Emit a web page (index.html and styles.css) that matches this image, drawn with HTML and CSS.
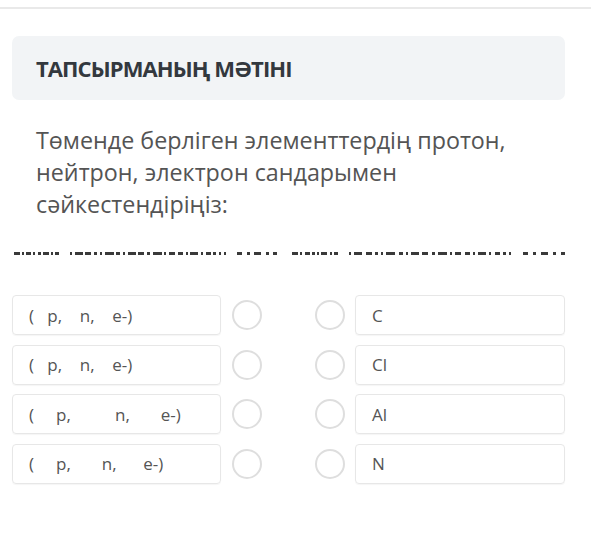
FILE: index.html
```html
<!DOCTYPE html>
<html lang="kk">
<head>
<meta charset="utf-8">
<link rel="stylesheet" href="styles.css">
</head>
<body>
<div class="topbar"></div>
<main class="page">
  <div class="task-head">ТАПСЫРМАНЫҢ МӘТІНІ</div>
  <p class="task-text">Төменде берліген элементтердің протон, нейтрон, электрон сандарымен сәйкестендіріңіз:</p>
  <div class="cutline">
    <span class="grp g1"><i class="d6"></i><i class="d2"></i><i class="d5"></i><i class="d2"></i><i class="d3"></i><i class="d6"></i><i class="d2"></i><i class="d4"></i></span>
    <span class="grp g2"><i class="d2"></i><i class="d8"></i><i class="d6"></i><i class="d3"></i><i class="d2"></i><i class="d9"></i><i class="d4"></i><i class="d2"></i><i class="d8"></i><i class="d6"></i><i class="d3"></i><i class="d9"></i><i class="d2"></i><i class="d6"></i><i class="d5"></i><i class="d2"></i><i class="d8"></i><i class="d2"></i><i class="d5"></i><i class="d3"></i><i class="d2"></i><i class="d2"></i></span>
    <span class="grp g3"><i class="d5"></i><i class="d3"></i><i class="d7"></i><i class="d3"></i><i class="d4"></i></span>
    <span class="grp g4"><i class="d6"></i><i class="d2"></i><i class="d5"></i><i class="d3"></i><i class="d2"></i><i class="d6"></i><i class="d2"></i><i class="d4"></i></span>
    <span class="grp g5"><i class="d2"></i><i class="d8"></i><i class="d6"></i><i class="d3"></i><i class="d2"></i><i class="d9"></i><i class="d4"></i><i class="d2"></i><i class="d8"></i><i class="d6"></i><i class="d3"></i><i class="d9"></i><i class="d2"></i><i class="d6"></i><i class="d5"></i><i class="d2"></i><i class="d8"></i><i class="d2"></i><i class="d5"></i><i class="d3"></i><i class="d2"></i></span>
    <span class="grp g6"><i class="d5"></i><i class="d3"></i><i class="d7"></i><i class="d3"></i><i class="d4"></i></span>
  </div>
  <div class="match">
    <div class="row">
      <div class="box">(   p,    n,    e-)</div>
      <span class="radio left"></span>
      <span class="radio right"></span>
      <div class="box">C</div>
    </div>
    <div class="row">
      <div class="box">(   p,    n,    e-)</div>
      <span class="radio left"></span>
      <span class="radio right"></span>
      <div class="box">Cl</div>
    </div>
    <div class="row">
      <div class="box">(     p,          n,       e-)</div>
      <span class="radio left"></span>
      <span class="radio right"></span>
      <div class="box">Al</div>
    </div>
    <div class="row">
      <div class="box">(     p,       n,      e-)</div>
      <span class="radio left"></span>
      <span class="radio right"></span>
      <div class="box">N</div>
    </div>
  </div>
</main>
</body>
</html>
```
FILE: styles.css
```css
* { box-sizing: border-box; }
html, body { margin: 0; padding: 0; background: #fff; }
body {
  font-family: "Open Sans", "Noto Sans", sans-serif;
  color: #555;
  width: 591px;
  height: 537px;
  overflow: hidden;
}
.topbar {
  height: 9px;
  border-bottom: 2px solid #e9e9e9;
}
.page {
  padding: 27px 26px 0 12px;
}
.task-head {
  height: 64px;
  background: #f2f4f6;
  border-radius: 7px;
  padding-left: 24px;
  display: flex;
  align-items: center;
  font-weight: 700;
  font-size: 22px;
  color: #33383e;
  letter-spacing: -0.9px;
}
.task-text {
  margin: 24px 0 0 0;
  padding-left: 24px;
  font-size: 23.3px;
  line-height: 32px;
  color: #545454;
  width: 540px;
}
.cutline {
  display: flex;
  margin-top: 32px;
  height: 3px;
}
.grp {
  display: flex;
  justify-content: space-between;
  height: 3px;
  flex: none;
}
.grp i {
  display: block;
  height: 3px;
  background: #3a3a3a;
  flex: none;
}
.g1 { width: 45px; margin-left: 2px; }
.g2 { width: 156px; margin-left: 11px; }
.g3 { width: 40px; margin-left: 11px; }
.g4 { width: 46px; margin-left: 15px; }
.g5 { width: 162px; margin-left: 11px; }
.g6 { width: 42px; margin-left: 12px; }
.d2 { width: 2px; }
.d3 { width: 3px; }
.d4 { width: 4px; }
.d5 { width: 5px; }
.d6 { width: 6px; }
.d7 { width: 7px; }
.d8 { width: 8px; }
.d9 { width: 9px; }
.match {
  margin-top: 40px;
  display: flex;
  flex-direction: column;
  gap: 9.5px;
}
.row {
  display: flex;
  align-items: center;
  height: 40px;
}
.box {
  height: 40px;
  border: 1px solid #e7e7e7;
  border-radius: 4px;
  box-shadow: 0 1px 1px rgba(0,0,0,0.04);
  display: flex;
  align-items: center;
  padding-left: 16px;
  font-size: 17px;
  color: #555;
  white-space: pre;
}
.row .box:first-child { width: 209px; }
.row .box:last-child { flex: 1; }
.radio {
  width: 30px;
  height: 30px;
  border: 2px solid #dedede;
  border-radius: 50%;
  flex: none;
}
.radio.left { margin-left: 11px; }
.radio.right { margin-left: 53px; margin-right: 10px; }
```
